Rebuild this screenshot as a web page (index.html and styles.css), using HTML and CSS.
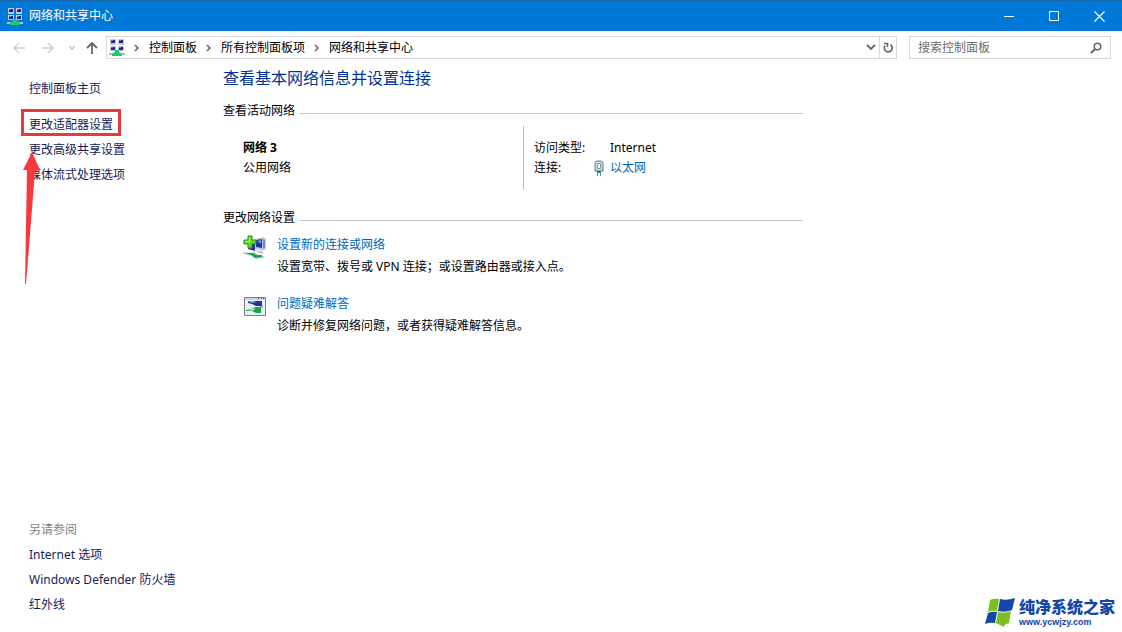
FILE: index.html
```html
<!DOCTYPE html>
<html lang="zh-CN">
<head>
<meta charset="utf-8">
<title>网络和共享中心</title>
<link rel="stylesheet" href="styles.css">
</head>
<body>
<svg class="defs" aria-hidden="true">
  <symbol id="network" viewBox="0 0 16 17">
    <path d="M1 0h6v6H1zM9 0h6v6H9zM1 7h6v5H1zM9 7h6v5H9z" fill="#c3cbdc"/>
    <path d="M2 1h4v3H2zM10 1h4v3h-4zM2 8h4v3H2zM10 8h4v3h-4z" fill="#20229a"/>
    <path d="M2 1h2v1H2zM10 1h2v1h-2zM2 8h2v1H2zM10 8h2v1h-2z" fill="#5d78d8"/>
    <path d="M0 14h16v2H0z" fill="#9fc3c4"/>
    <path d="M6 11h4v2l3 2v2H3v-2l3-2z" fill="#1cc777"/>
  </symbol>
  <symbol id="chevron" viewBox="0 0 6 8"><path d="M1 1l3 3-3 3" fill="none" stroke="#666" stroke-width="1.5"/></symbol>
</svg>

<header class="titlebar">
  <svg class="net-icon"><use href="#network"/></svg>
  <h1 class="window-title">网络和共享中心</h1>
  <div class="window-buttons">
    <button type="button" aria-label="最小化"><svg width="11" height="11"><path d="M0 5.500h10" stroke="#fff"/></svg></button>
    <button type="button" aria-label="最大化"><svg width="11" height="11"><path d="M.5.5h9v9h-9z" fill="none" stroke="#fff"/></svg></button>
    <button type="button" aria-label="关闭"><svg width="11" height="11"><path d="M.5.5l10 10M10.500.5l-10 10" stroke="#fff" stroke-width="1.200"/></svg></button>
  </div>
</header>

<div class="toolbar">
  <div class="history">
    <button type="button" aria-label="后退"><svg width="12" height="12"><path d="M12 6H1M6 1L1 6l5 5" fill="none" stroke="#d0d0d0" stroke-width="1.500"/></svg></button>
    <button type="button" aria-label="前进"><svg width="12" height="12"><path d="M0 6h11M6 1l5 5-5 5" fill="none" stroke="#d0d0d0" stroke-width="1.500"/></svg></button>
    <button type="button" class="recent" aria-label="最近的位置"><svg width="6" height="4"><path d="M.5.5L3 3 5.500.5" fill="none" stroke="#bbb" stroke-width="1.300"/></svg></button>
    <button type="button" aria-label="上移"><svg width="12" height="13"><path d="M6 13V2M1 7l5-5 5 5" fill="none" stroke="#666" stroke-width="1.800"/></svg></button>
  </div>
  <nav class="address" aria-label="地址">
    <svg class="net-icon"><use href="#network"/></svg>
    <svg class="sep"><use href="#chevron"/></svg>
    <a href="#">控制面板</a>
    <svg class="sep"><use href="#chevron"/></svg>
    <a href="#">所有控制面板项</a>
    <svg class="sep"><use href="#chevron"/></svg>
    <a href="#">网络和共享中心</a>
    <button type="button" class="drop" aria-label="以前的位置"><svg width="10" height="7"><path d="M1 1l4 4 4-4" fill="none" stroke="#666" stroke-width="1.800"/></svg></button>
    <button type="button" class="refresh" aria-label="刷新"><svg width="11" height="12" viewBox="0 0 11 12"><path d="M7.500 2.600A4 4 0 1 1 2 3.500M1 1.500h3.500V5" fill="none" stroke="#666" stroke-width="1.600"/></svg></button>
  </nav>
  <div class="search">
    <input type="search" placeholder="搜索控制面板" aria-label="搜索控制面板">
    <svg width="12" height="12"><circle cx="7.500" cy="4.500" r="3.300" fill="none" stroke="#666" stroke-width="1.600"/><path d="M5 7L1 11" stroke="#666" stroke-width="2"/></svg>
  </div>
</div>

<div class="page">
  <aside class="sidebar">
    <nav class="tasks-nav">
      <a class="home" href="#">控制面板主页</a>
      <a class="marked" href="#">更改适配器设置
        <svg class="arrow" width="20" height="134" aria-hidden="true"><path d="M10 0l8 18-5 1L4 132H3L5 18H1z" fill="#f8383c"/></svg>
      </a>
      <a href="#">更改高级共享设置</a>
      <a href="#">媒体流式处理选项</a>
    </nav>
    <nav class="see-also">
      <h2>另请参阅</h2>
      <a href="#">Internet 选项</a>
      <a href="#">Windows Defender 防火墙</a>
      <a href="#">红外线</a>
    </nav>
  </aside>

  <main class="content">
    <h2 class="headline">查看基本网络信息并设置连接</h2>
    <section>
      <h3 class="group">查看活动网络</h3>
      <div class="network">
        <div class="network-name"><strong>网络 3</strong><span>公用网络</span></div>
        <dl class="details">
          <dt>访问类型:</dt><dd>Internet</dd>
          <dt>连接:</dt>
          <dd><svg class="plug" viewBox="0 0 10 16"><path d="M2.500 1h5L9 3v8H1V3z" fill="#c9dae4" stroke="#5d7c90"/><path d="M3.500 3.500h3v5h-3z" fill="#fff" stroke="#8199a8"/><path d="M3 11h4v2H3z" fill="#456d82"/><path d="M3.500 12v4M6.500 12v4" stroke="#2d9ab5"/></svg><a href="#">以太网</a></dd>
        </dl>
      </div>
    </section>
    <section>
      <h3 class="group">更改网络设置</h3>
      <ul class="tasks">
        <li>
          <svg viewBox="0 0 24 24">
            <path d="M12 4l8-2 3 2v10l-4 2-7-2z" fill="#c5cee0"/><path d="M13 5l6-1v9l-6-1z" fill="#2530a8"/><path d="M14 6l4-1v4z" fill="#718fe8"/><path d="M20 4l2 1v8l-2 1z" fill="#6f87d4"/>
            <path d="M5 8l7 1v7l-7-2z" fill="#252c9e"/><path d="M10 15l10 2v2l-5-2z" fill="#a4b4c5"/>
            <path d="M0 17l8 1 3-1 4 3 6 1v2l-8 1-4-3-9-2z" fill="#b7d9c4"/><path d="M2 18l8 0 4 2h5v2l-7 1-4-3z" fill="#18a453"/>
            <path d="M5 1h4v4h4v4H9v4H5V9H1V5h4z" fill="#62d82e" stroke="#278e17"/><path d="M6 2h1v5H2V6h4z" fill="#b7f36e"/>
          </svg>
          <div><a href="#">设置新的连接或网络</a><p>设置宽带、拨号或 VPN 连接；或设置路由器或接入点。</p></div>
        </li>
        <li>
          <svg viewBox="0 0 24 24">
            <path d="M1.500 3.500h21v18h-21z" fill="#edf1f5" stroke="#777f86"/><path d="M2 4h20v2H2z" fill="#cfd6de"/><path d="M15 4h1v1h-1zM18 4h1v1h-1zM20 4h1v1h-1z" fill="#555"/>
            <path d="M5 7h14v5l-6 0-4-2-4-1z" fill="#222fa6"/><path d="M4 7l6 0 4 1-5 1z" fill="#7da0e0"/><path d="M16 13l4-2v3z" fill="#9baab9"/>
            <path d="M3 16l6-1 3-2h6v6l-5 0-4-2-6 0z" fill="#16a34c"/><path d="M3 16l6-1 4-1-3 3z" fill="#9bdcab"/>
          </svg>
          <div><a href="#">问题疑难解答</a><p>诊断并修复网络问题，或者获得疑难解答信息。</p></div>
        </li>
      </ul>
    </section>
  </main>
</div>

<div class="watermark">
  <svg viewBox="0 0 30 30"><path d="M5 3q4-2 9-1l-2 12q-5-1-9 1z" fill="#7cc01f"/><path d="M15 2q7 2 15-1l-3 12q-7 3-14 1z" fill="#1446a8"/><path d="M3 16q4-2 9-1l-2 11q-5-1-10 1z" fill="#1446a8"/><path d="M13 15q7 2 13-1l-2 12q-5 1-5 4l-8-4z" fill="#7cc01f"/></svg>
  <div><b>纯净系统之家</b><span>www.ycwjzy.com</span></div>
</div>
</body>
</html>
```
FILE: styles.css
```css
* { box-sizing: border-box; }
body {
  margin: 0;
  min-height: 100vh;
  display: flex;
  flex-direction: column;
  position: relative;
  background: #fff;
  color: #000;
  font: 12px/20px "Noto Sans", "Noto Sans CJK SC", sans-serif;
}
h1, h2, h3, p, ul, dl, dd { margin: 0; padding: 0; font-size: 12px; font-weight: 400; }
ul { list-style: none; }
a { color: inherit; text-decoration: none; }
button { border: 0; padding: 0; background: none; display: flex; align-items: center; justify-content: center; }
svg { flex: none; }
.defs { position: absolute; width: 0; height: 0; }
.net-icon { width: 16px; height: 17px; }

.titlebar { display: flex; align-items: center; height: 31px; padding-left: 7px; gap: 6px; background: #0078d7; border-top: 1px solid #1767a9; color: #fff; }
.window-buttons { display: flex; align-self: stretch; margin-left: auto; }
.window-buttons button { width: 45px; }

.toolbar { display: flex; align-items: center; padding: 5px 11px 1px 13px; }
.history { display: flex; align-items: center; width: 93px; gap: 17px; }
.history .recent { margin: 0 -6px 0 -2px; }
.address { flex: 1; display: flex; align-items: center; height: 23px; padding-left: 2px; border: 1px solid #d9d9d9; }
.sep { width: 6px; height: 8px; margin: 0 9px; }
.address .drop { width: 16px; margin-left: auto; align-self: stretch; }
.address .refresh { width: 17px; align-self: stretch; border-left: 1px solid #d9d9d9; }
.search { display: flex; align-items: center; width: 202px; height: 23px; margin-left: 12px; padding: 0 8px; border: 1px solid #d9d9d9; }
.search input { flex: 1; min-width: 0; border: 0; padding: 0; outline: 0; font: inherit; }
.search input::placeholder { color: #6d6d6d; opacity: 1; }

.page { flex: 1; display: flex; }
.sidebar { display: flex; flex-direction: column; justify-content: space-between; width: 223px; padding: 16px 0 15px 29px; line-height: 25px; color: #151c55; }
.tasks-nav, .see-also { display: flex; flex-direction: column; align-items: flex-start; }
.see-also h2 { color: #838383; }
.home { margin-bottom: 11px; }
.marked { position: relative; }
.marked::before { content: ""; position: absolute; inset: -3px -8px 1px; border: 3px solid #e33b3e; }
.arrow { position: absolute; left: -7px; top: 40px; }

.content { flex: 1; max-width: 580px; padding-top: 6px; }
.headline { font-size: 16px; line-height: 24px; margin-bottom: 11px; color: #003399; }
.group { display: flex; align-items: center; gap: 5px; }
.group::after { content: ""; flex: 1; height: 1px; margin-top: 4px; background: #c6c6c6; }
.network { display: flex; margin: 5px 0 18px 20px; }
.network-name { display: flex; flex-direction: column; width: 280px; padding-top: 12px; }
.details { display: grid; grid-template-columns: 60px auto; align-content: start; padding: 12px 0 12px 10px; border-left: 1px solid #b8b8b8; }
.details dd { display: flex; align-items: center; padding-left: 16px; }
.plug { width: 10px; height: 16px; margin: 0 6px 0 -16px; }
.content a { color: #0066bb; }
.tasks { display: flex; flex-direction: column; gap: 15px; padding: 6px 0 0 20px; line-height: 22px; }
.tasks li { display: flex; gap: 10px; }
.tasks svg { width: 24px; height: 24px; margin-top: 1px; }

.watermark { position: absolute; right: 7px; bottom: 5px; display: flex; align-items: center; gap: 4px; color: #1446a8; }
.watermark > svg { width: 30px; height: 30px; }
.watermark div { display: flex; flex-direction: column; gap: 1px; }
.watermark b { font-size: 16px; font-weight: 900; line-height: 18px; }
.watermark span { font: 700 9px/10px "Liberation Sans", sans-serif; }
```
